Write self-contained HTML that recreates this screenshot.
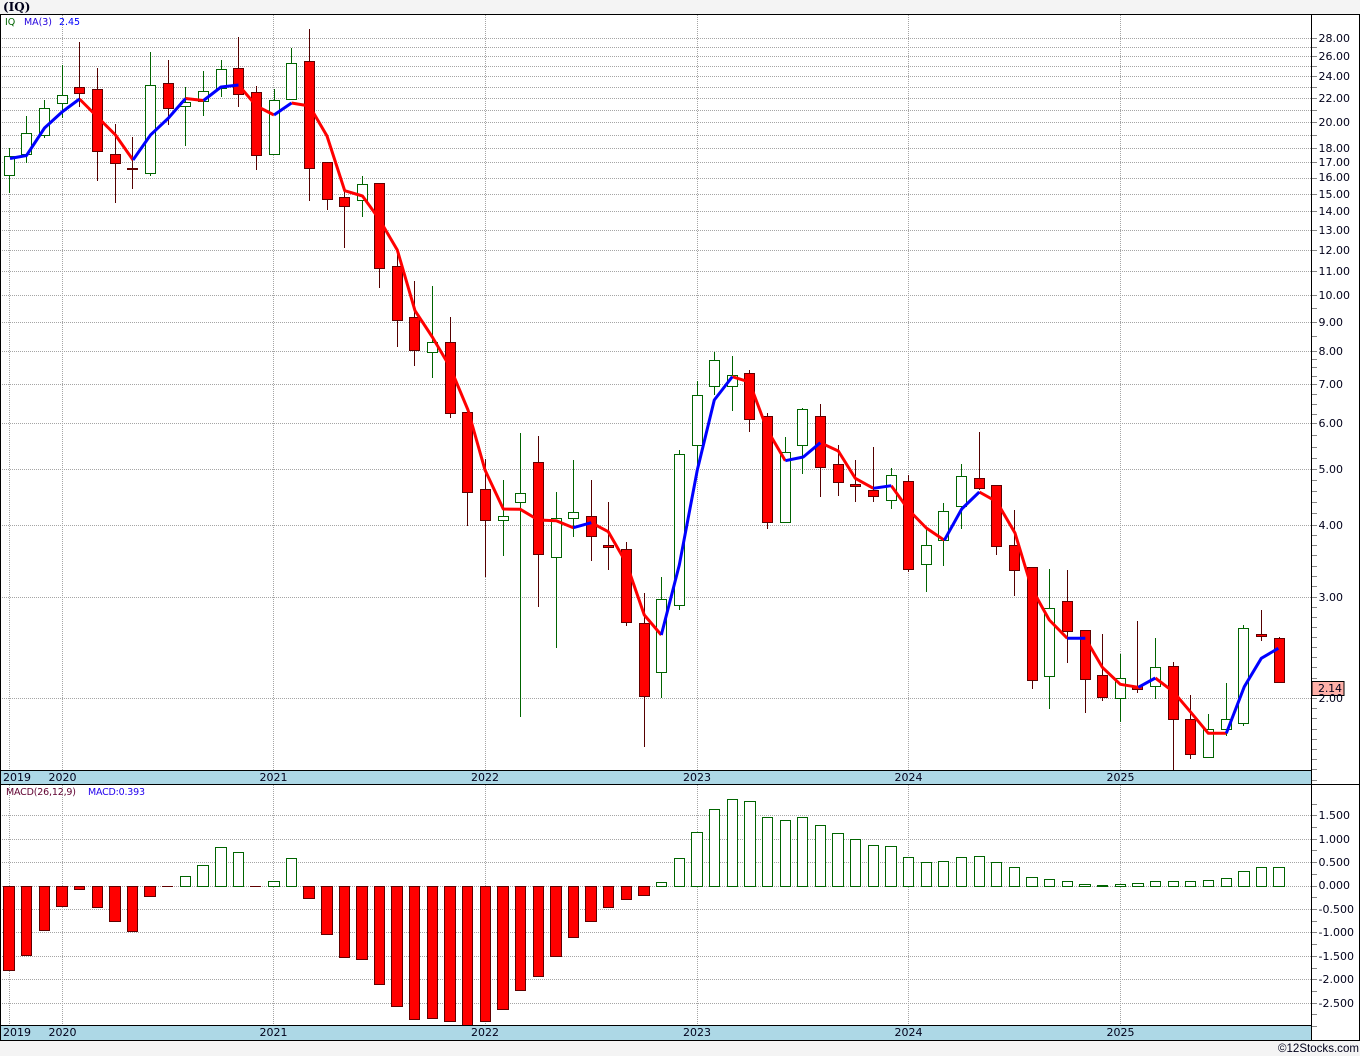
<!DOCTYPE html>
<html><head><meta charset="utf-8"><title>IQ</title>
<style>
html,body{margin:0;padding:0;background:#f4f4f4;width:1360px;height:1056px;overflow:hidden}
svg{display:block}
text{font-family:"DejaVu Sans","Liberation Sans",sans-serif;font-size:11px;fill:#00001a}
</style></head><body>
<svg width="1360" height="1056" viewBox="0 0 1360 1056" xmlns="http://www.w3.org/2000/svg">
<rect x="0" y="0" width="1360" height="1056" fill="#f4f4f4"/>
<rect x="0" y="14" width="1360" height="1026" fill="#fff"/>
<g shape-rendering="crispEdges">
<rect x="0" y="771" width="1311" height="13" fill="#add8e6"/>
<rect x="0" y="1026" width="1311" height="14" fill="#add8e6"/>
<!-- grid -->
<path fill="none" stroke="#a5a5a5" stroke-width="1" stroke-dasharray="1 1" d="M2 38.5H1311M2 47.5H1311M2 56.5H1311M2 66.5H1311M2 76.5H1311M2 87.5H1311M2 98.5H1311M2 110.5H1311M2 122.5H1311M2 135.5H1311M2 148.5H1311M2 162.5H1311M2 178.5H1311M2 194.5H1311M2 211.5H1311M2 230.5H1311M2 250.5H1311M2 271.5H1311M2 295.5H1311M2 322.5H1311M2 351.5H1311M2 384.5H1311M2 423.5H1311M2 469.5H1311M2 525.5H1311M2 597.5H1311M2 698.5H1311
M2 815.5H1311M2 839.5H1311M2 862.5H1311M2 886.5H1311M2 909.5H1311M2 932.5H1311M2 956.5H1311M2 979.5H1311M2 1003.5H1311
M9.5 148V770M62.5 15V770M273.5 15V770M485.5 15V770M697.5 15V770M908.5 15V770M1120.5 15V770
M9.5 785V1025M62.5 785V1025M273.5 785V1025M485.5 785V1025M697.5 785V1025M908.5 785V1025M1120.5 785V1025"/>
<!-- axis ticks -->
<path fill="none" stroke="#888" stroke-width="1" d="M1312 38.5h5M1312 47.5h5M1312 56.5h5M1312 66.5h5M1312 76.5h5M1312 87.5h5M1312 98.5h5M1312 110.5h5M1312 122.5h5M1312 135.5h5M1312 148.5h5M1312 162.5h5M1312 178.5h5M1312 194.5h5M1312 211.5h5M1312 230.5h5M1312 250.5h5M1312 271.5h5M1312 295.5h5M1312 308.5h5M1312 322.5h5M1312 336.5h5M1312 351.5h5M1312 359.5h5M1312 367.5h5M1312 376.5h5M1312 384.5h5M1312 394.5h5M1312 404.5h5M1312 414.5h5M1312 423.5h5M1312 435.5h5M1312 447.5h5M1312 458.5h5M1312 469.5h5M1312 480.5h5M1312 491.5h5M1312 502.5h5M1312 513.5h5M1312 525.5h5M1312 535.5h5M1312 545.5h5M1312 555.5h5M1312 566.5h5M1312 576.5h5M1312 586.5h5M1312 597.5h5M1312 607.5h5M1312 617.5h5M1312 627.5h5M1312 637.5h5M1312 647.5h5M1312 657.5h5M1312 667.5h5M1312 678.5h5M1312 688.5h5M1312 698.5h5M1312 708.5h5M1312 718.5h5M1312 729.5h5M1312 739.5h5M1312 749.5h5M1312 759.5h5M1312 769.5h5M1312 780.5h5
M1312 804.5h5M1312 815.5h5M1312 827.5h5M1312 839.5h5M1312 850.5h5M1312 862.5h5M1312 874.5h5M1312 886.5h5M1312 897.5h5M1312 909.5h5M1312 921.5h5M1312 932.5h5M1312 944.5h5M1312 956.5h5M1312 968.5h5M1312 979.5h5M1312 991.5h5M1312 1003.5h5M1312 1014.5h5M1312 1026.5h5"/>
<!-- green wicks -->
<path fill="none" stroke="#006400" stroke-width="1" d="M9.5 148V193M26.5 116V163M44.5 100V138M62.5 65V118M150.5 52V176M185.5 87V146M203.5 71V116M221.5 60V97M274.5 89V155M291.5 48V100M362.5 176V217M432.5 286V378M503.5 480V556M520.5 433V717M556.5 492V648M573.5 460V537M661.5 577V698M679.5 450V610M697.5 381V467M714.5 352V395M732.5 356V411M785.5 437V523M802.5 408V474M891.5 468V509M926.5 528V592M943.5 503V566M961.5 464V529M1049.5 569V709M1120.5 654V722M1155.5 638V699M1208.5 714V758M1226.5 683V736M1243.5 625V726"/>
<!-- red wicks -->
<path fill="none" stroke="#550000" stroke-width="1" d="M79.5 42V107M97.5 68V181M115.5 124V203M132.5 137V189M168.5 60V125M238.5 37V107M256.5 86V170M309.5 29V201M327.5 162V210M344.5 190V248M379.5 183V288M397.5 250V347M414.5 281V366M450.5 317V418M467.5 412V526M485.5 459V577M538.5 436V607M591.5 480V561M608.5 502V570M626.5 542V626M644.5 593V747M749.5 370V432M767.5 413V529M820.5 404V497M838.5 445V496M855.5 460V502M873.5 447V502M908.5 475V572M979.5 432V490M996.5 485V555M1014.5 510V596M1032.5 567V689M1067.5 570V663M1085.5 630V713M1102.5 634V701M1137.5 621V693M1173.5 662V770M1190.5 695V759M1261.5 610V641M1279.5 637V683"/>
<!-- green bodies -->
<path fill="#fff" stroke="#006400" stroke-width="1" d="M4.5 156.5h10v19h-10zM21.5 133.5h10v21h-10zM39.5 108.5h10v27h-10zM57.5 95.5h10v8h-10zM145.5 85.5h10v88h-10zM180.5 102.5h10v4h-10zM198.5 91.5h10v10h-10zM216.5 69.5h10v19h-10zM269.5 100.5h10v54h-10zM286.5 63.5h10v36h-10zM357.5 184.5h10v16h-10zM427.5 342.5h10v10h-10zM498.5 516.5h10v4h-10zM515.5 493.5h10v9h-10zM551.5 518.5h10v39h-10zM568.5 512.5h10v6h-10zM656.5 599.5h10v73h-10zM674.5 454.5h10v151h-10zM692.5 395.5h10v50h-10zM709.5 360.5h10v26h-10zM727.5 375.5h10v11h-10zM780.5 452.5h10v70h-10zM797.5 409.5h10v36h-10zM886.5 475.5h10v25h-10zM921.5 545.5h10v19h-10zM938.5 511.5h10v29h-10zM956.5 476.5h10v30h-10zM1044.5 608.5h10v68h-10zM1115.5 678.5h10v20h-10zM1150.5 667.5h10v19h-10zM1203.5 729.5h10v28h-10zM1221.5 719.5h10v10h-10zM1238.5 628.5h10v95h-10z"/>
<!-- red bodies -->
<path fill="#f00" stroke="#600000" stroke-width="1" d="M74.5 87.5h10v6h-10zM92.5 89.5h10v62h-10zM110.5 154.5h10v9h-10zM127.5 168.5h10v1h-10zM163.5 83.5h10v25h-10zM233.5 68.5h10v26h-10zM251.5 92.5h10v63h-10zM304.5 61.5h10v107h-10zM322.5 162.5h10v37h-10zM339.5 197.5h10v9h-10zM374.5 183.5h10v85h-10zM392.5 266.5h10v54h-10zM409.5 317.5h10v33h-10zM445.5 342.5h10v71h-10zM462.5 412.5h10v80h-10zM480.5 489.5h10v31h-10zM533.5 462.5h10v92h-10zM586.5 516.5h10v20h-10zM603.5 545.5h10v2h-10zM621.5 549.5h10v73h-10zM639.5 623.5h10v73h-10zM744.5 373.5h10v46h-10zM762.5 416.5h10v106h-10zM815.5 416.5h10v51h-10zM833.5 464.5h10v18h-10zM850.5 484.5h10v2h-10zM868.5 490.5h10v6h-10zM903.5 481.5h10v88h-10zM974.5 478.5h10v10h-10zM991.5 485.5h10v61h-10zM1009.5 545.5h10v25h-10zM1027.5 567.5h10v113h-10zM1062.5 601.5h10v30h-10zM1080.5 630.5h10v49h-10zM1097.5 675.5h10v22h-10zM1132.5 686.5h10v3h-10zM1168.5 666.5h10v53h-10zM1185.5 719.5h10v35h-10zM1256.5 634.5h10v2h-10zM1274.5 638.5h10v44h-10z"/>
<!-- MACD red -->
<path fill="#f00" stroke="#600000" stroke-width="1" d="M3.5 886.5H14.5V970.5H3.5zM21.5 886.5H31.5V955.5H21.5zM39.5 886.5H49.5V930.5H39.5zM56.5 886.5H67.5V906.5H56.5zM74.5 886.5H84.5V889.5H74.5zM92.5 886.5H102.5V907.5H92.5zM109.5 886.5H120.5V921.5H109.5zM127.5 886.5H137.5V931.5H127.5zM144.5 886.5H155.5V896.5H144.5zM303.5 886.5H314.5V898.5H303.5zM321.5 886.5H332.5V934.5H321.5zM339.5 886.5H349.5V957.5H339.5zM356.5 886.5H367.5V959.5H356.5zM374.5 886.5H384.5V984.5H374.5zM391.5 886.5H402.5V1006.5H391.5zM409.5 886.5H419.5V1019.5H409.5zM427.5 886.5H437.5V1018.5H427.5zM444.5 886.5H455.5V1021.5H444.5zM462.5 886.5H472.5V1025.5H462.5zM480.5 886.5H490.5V1021.5H480.5zM497.5 886.5H508.5V1009.5H497.5zM515.5 886.5H525.5V990.5H515.5zM533.5 886.5H543.5V976.5H533.5zM550.5 886.5H561.5V956.5H550.5zM568.5 886.5H578.5V937.5H568.5zM585.5 886.5H596.5V921.5H585.5zM603.5 886.5H613.5V907.5H603.5zM621.5 886.5H631.5V899.5H621.5zM638.5 886.5H649.5V895.5H638.5z"/>
<path fill="none" stroke="#600000" stroke-width="1" d="M162 886.5H173M250 886.5H261"/>
<!-- MACD green -->
<path fill="#fff" stroke="#006400" stroke-width="1" d="M180.5 876.5H190.5V886.5H180.5zM197.5 865.5H208.5V886.5H197.5zM215.5 847.5H226.5V886.5H215.5zM233.5 852.5H243.5V886.5H233.5zM268.5 881.5H279.5V886.5H268.5zM286.5 858.5H296.5V886.5H286.5zM656.5 882.5H666.5V886.5H656.5zM674.5 858.5H684.5V886.5H674.5zM691.5 832.5H702.5V886.5H691.5zM709.5 809.5H719.5V886.5H709.5zM727.5 799.5H737.5V886.5H727.5zM744.5 801.5H755.5V886.5H744.5zM762.5 817.5H772.5V886.5H762.5zM780.5 820.5H790.5V886.5H780.5zM797.5 817.5H807.5V886.5H797.5zM815.5 825.5H825.5V886.5H815.5zM832.5 833.5H843.5V886.5H832.5zM850.5 839.5H860.5V886.5H850.5zM868.5 845.5H878.5V886.5H868.5zM885.5 846.5H896.5V886.5H885.5zM903.5 857.5H913.5V886.5H903.5zM921.5 862.5H931.5V886.5H921.5zM938.5 861.5H948.5V886.5H938.5zM956.5 857.5H966.5V886.5H956.5zM974.5 856.5H984.5V886.5H974.5zM991.5 862.5H1001.5V886.5H991.5zM1009.5 867.5H1019.5V886.5H1009.5zM1026.5 877.5H1037.5V886.5H1026.5zM1044.5 879.5H1054.5V886.5H1044.5zM1062.5 881.5H1072.5V886.5H1062.5zM1079.5 884.5H1090.5V886.5H1079.5zM1097.5 885.5H1107.5V886.5H1097.5zM1115.5 884.5H1125.5V886.5H1115.5zM1132.5 883.5H1143.5V886.5H1132.5zM1150.5 881.5H1160.5V886.5H1150.5zM1168.5 881.5H1178.5V886.5H1168.5zM1185.5 881.5H1195.5V886.5H1185.5zM1203.5 880.5H1213.5V886.5H1203.5zM1221.5 878.5H1231.5V886.5H1221.5zM1238.5 871.5H1249.5V886.5H1238.5zM1256.5 867.5H1266.5V886.5H1256.5zM1273.5 867.5H1284.5V886.5H1273.5z"/>
</g>
<!-- moving average -->
<g fill="none" stroke-width="3" stroke-linejoin="round" stroke-linecap="butt">
<g stroke="#f00">
<polyline points="79.5,99 97.5,117 115.5,135 133,160"/>
<polyline points="185.5,98.5 203.5,100.5"/>
<polyline points="238.5,85 256.5,106 274,115"/>
<polyline points="291.5,103 309.5,106 327,136 344.7,190.7 362.5,196 379.3,219.3 397.3,250 415,310.7 432.3,337 450,367 468,410 485,470 503.3,509 520.3,509.3 538.3,520 556.3,520.7 573.3,527.7"/>
<polyline points="591.3,522.7 608.3,531.7 626.3,563 644.3,615 661.3,635"/>
<polyline points="732.3,376.7 749.3,382 767.3,430 785.3,460.7"/>
<polyline points="820.3,442.7 838.3,451 855.3,478.3 873.3,488.3"/>
<polyline points="891.3,485.7 908.7,510 926.3,528 944.3,540.3"/>
<polyline points="979.3,492 996.7,501.7 1015,533 1032,589 1049.3,620 1067.3,638.3"/>
<polyline points="1085.3,638.3 1102.3,667.3 1120.3,684.3 1138.3,687.3"/>
<polyline points="1155.3,678 1173.3,691.7 1190.3,711.7 1208.3,733.3 1226.3,733.3"/>
</g>
<g stroke="#00f">
<polyline points="10,158.5 26.5,155.5 44.5,128 62,112 79.5,99"/>
<polyline points="133,160 150.5,135 168.5,118 185.5,98.5"/>
<polyline points="203.5,100.5 221,87 238.5,85"/>
<polyline points="274,115 291.5,103"/>
<polyline points="573.3,527.7 591.3,522.7"/>
<polyline points="661.3,635 679.3,565 697.3,470 714.3,400 732.3,376.7"/>
<polyline points="785.3,460.7 803.3,457 820.3,442.7"/>
<polyline points="873.3,488.3 891.3,485.7"/>
<polyline points="944.3,540.3 961.7,509 979.3,492"/>
<polyline points="1067.3,638.3 1085.3,638.3"/>
<polyline points="1138.3,687.3 1155.3,678"/>
<polyline points="1226.3,733.3 1244.3,686.7 1261.3,658.3 1278.3,648.3"/>
</g>
</g>
<!-- frame -->
<g shape-rendering="crispEdges" fill="none" stroke="#000" stroke-width="1">
<path d="M0 14.5H1360M0 770.5H1311M0 784.5H1360M0 1025.5H1311M0 1040.5H1360M0.5 14V1041M1311.5 14V1041M1359.5 14V1041"/>
</g>
<!-- price label -->
<rect x="1312" y="681.5" width="32" height="14" fill="#ffb0a8" stroke="#000" stroke-width="1" shape-rendering="crispEdges"/>
<!-- text -->
<text x="3" y="11" style="font-family:'DejaVu Serif','Liberation Serif',serif;font-weight:bold;font-size:12px">(IQ)</text>
<text x="5" y="25" style="font-size:9.5px;fill:#006400">IQ</text>
<text x="24" y="25" style="font-size:9.5px;fill:#2200dd" textLength="28">MA(3)</text>
<text x="59" y="25" style="font-size:9.5px;fill:#0000ff" textLength="21">2.45</text>
<text x="6" y="795" style="font-size:9.5px;fill:#600030" textLength="70">MACD(26,12,9)</text>
<text x="88" y="795" style="font-size:9.5px;fill:#2200ee" textLength="57">MACD:0.393</text>

<g>
<text x="1318.5" y="42">28.00</text>
<text x="1318.5" y="60">26.00</text>
<text x="1318.5" y="80">24.00</text>
<text x="1318.5" y="102">22.00</text>
<text x="1318.5" y="126">20.00</text>
<text x="1318.5" y="152">18.00</text>
<text x="1318.5" y="166">17.00</text>
<text x="1318.5" y="181">16.00</text>
<text x="1318.5" y="198">15.00</text>
<text x="1318.5" y="215">14.00</text>
<text x="1318.5" y="234">13.00</text>
<text x="1318.5" y="254">12.00</text>
<text x="1318.5" y="275">11.00</text>
<text x="1318.5" y="299">10.00</text>
<text x="1318.5" y="326">9.00</text>
<text x="1318.5" y="355">8.00</text>
<text x="1318.5" y="388">7.00</text>
<text x="1318.5" y="427">6.00</text>
<text x="1318.5" y="473">5.00</text>
<text x="1318.5" y="529">4.00</text>
<text x="1318.5" y="601">3.00</text>
<text x="1318.5" y="702">2.00</text>
<text x="1318" y="692" textLength="24">2.14</text>
<text x="1318.5" y="819">1.500</text>
<text x="1318.5" y="843">1.000</text>
<text x="1318.5" y="866">0.500</text>
<text x="1318.5" y="889">0.000</text>
<text x="1318.5" y="913">-0.500</text>
<text x="1318.5" y="936">-1.000</text>
<text x="1318.5" y="960">-1.500</text>
<text x="1318.5" y="983">-2.000</text>
<text x="1318.5" y="1007">-2.500</text>
</g>
<g>
<text x="3" y="781">2019</text><text x="48.5" y="781">2020</text><text x="259.5" y="781">2021</text><text x="471" y="781">2022</text><text x="683" y="781">2023</text><text x="894.5" y="781">2024</text><text x="1106.5" y="781">2025</text>
<text x="3" y="1036">2019</text><text x="48.5" y="1036">2020</text><text x="259.5" y="1036">2021</text><text x="471" y="1036">2022</text><text x="683" y="1036">2023</text><text x="894.5" y="1036">2024</text><text x="1106.5" y="1036">2025</text>
</g>
<text x="1278" y="1052" textLength="81" lengthAdjust="spacingAndGlyphs" style="font-family:'Liberation Sans',sans-serif;font-size:12px">©12Stocks.com</text>
</svg>
</body></html>
